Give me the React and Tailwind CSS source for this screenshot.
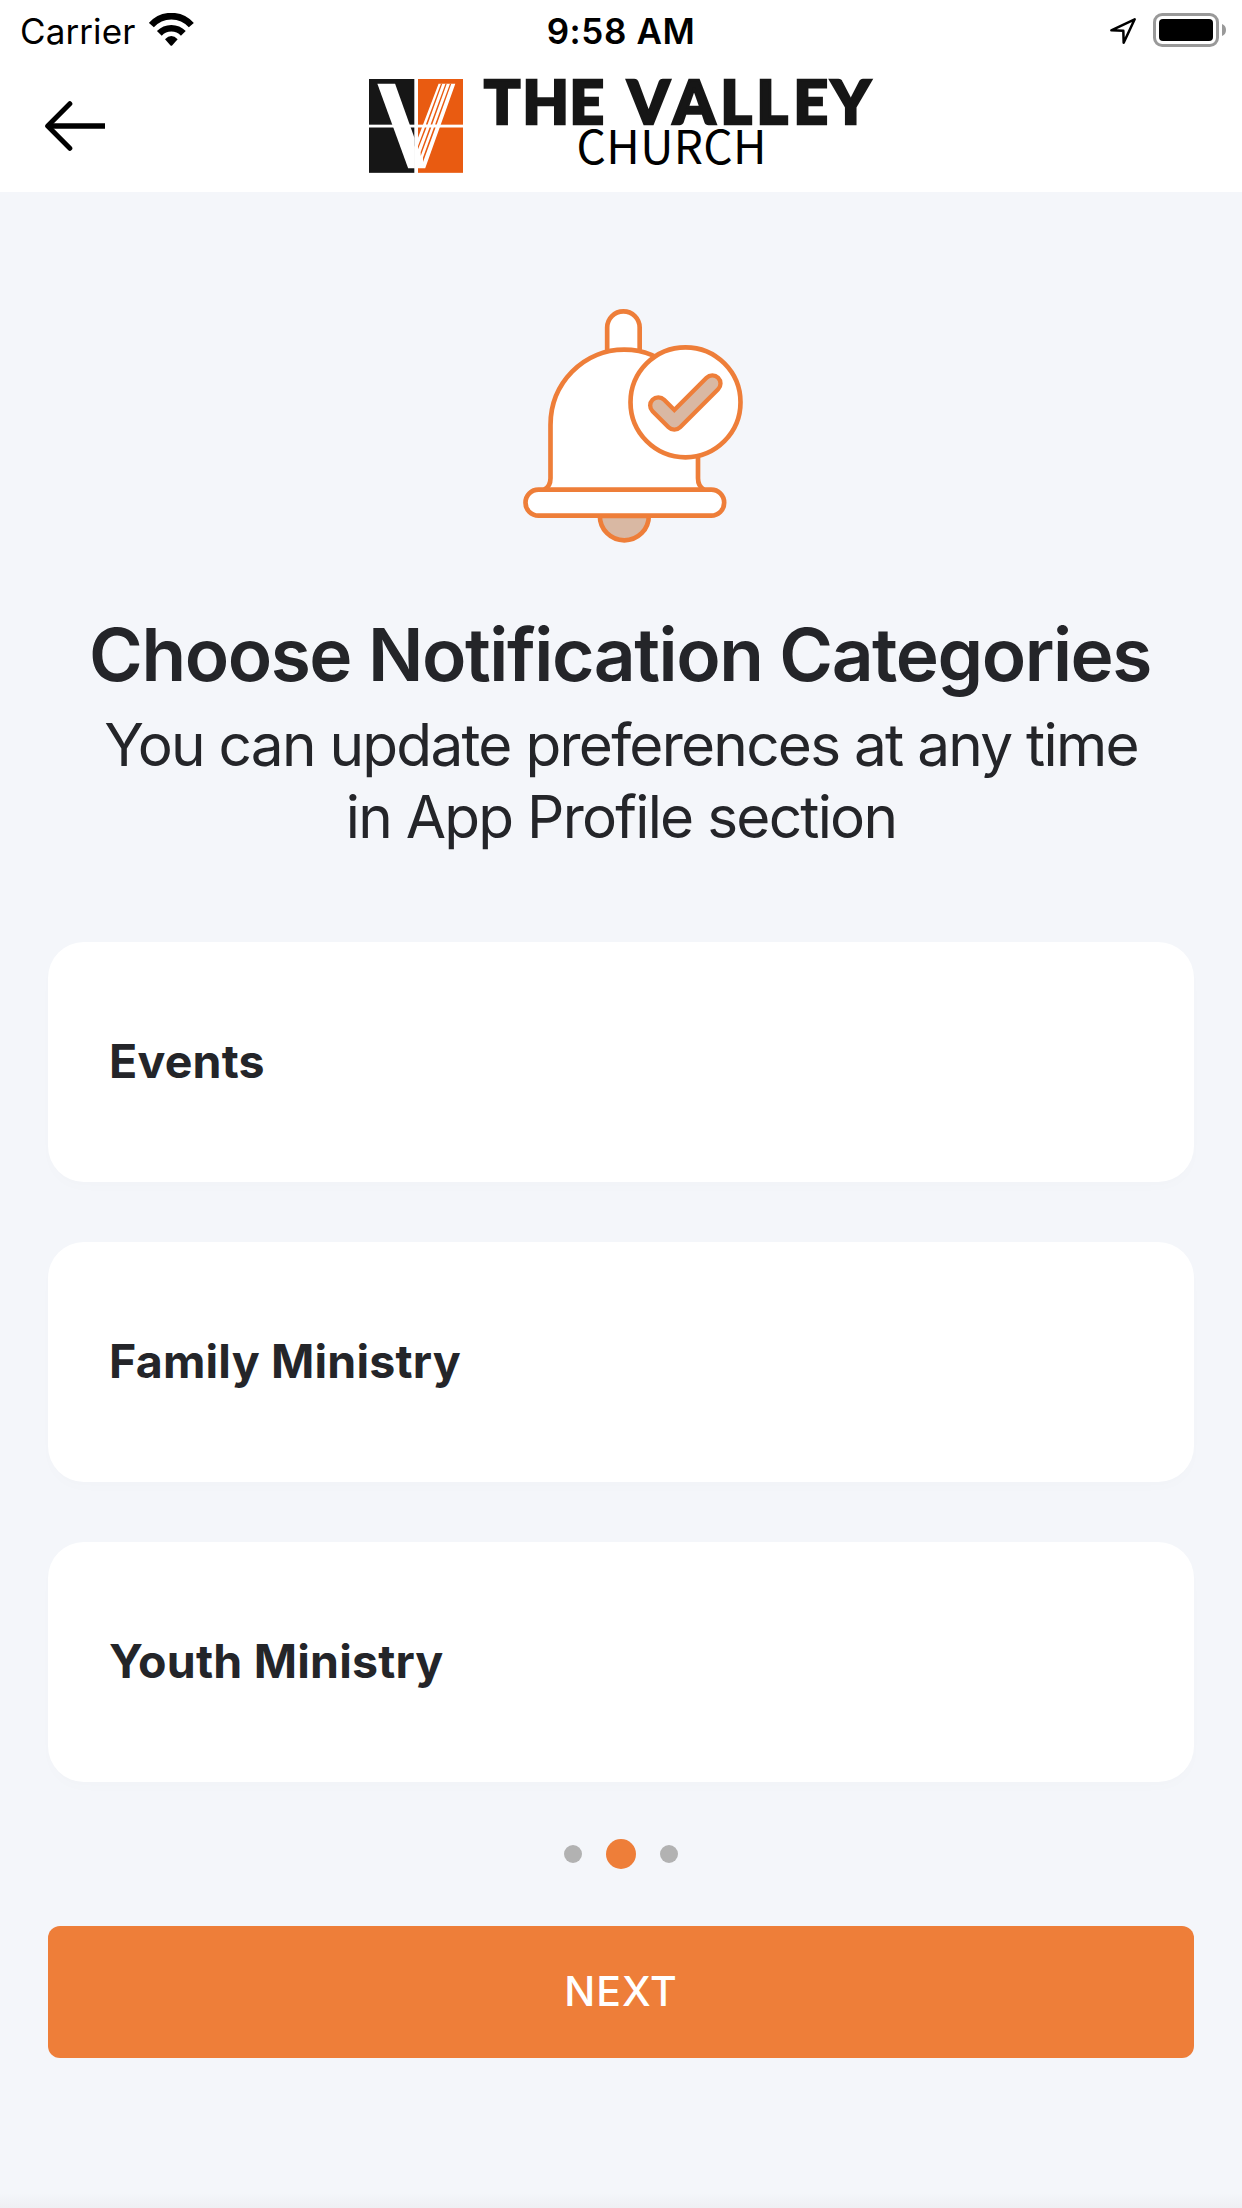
import React from 'react';

const categories = [
  { id: 'events', name: 'Events' },
  { id: 'family', name: 'Family Ministry' },
  { id: 'youth', name: 'Youth Ministry' },
];

function WifiIcon() {
  return (
    <svg className="w-[45px] h-[33px] -mt-[2px]" viewBox="449 39 135 99" fill="none" stroke="#000">
      <path strokeWidth="20" d="M456 75.500a80 80 0 0 1 120 0" />
      <path strokeWidth="20" d="M480 100a50 50 0 0 1 72 0" />
      <path fill="#000" stroke="none" d="M497 118q19-20 38 0l-16 18q-3 3-6 0z" />
    </svg>
  );
}

function LocationIcon() {
  return (
    <svg className="w-[26px] h-[26px] mt-[2px]" viewBox="90 54 78 78" fill="none" stroke="#000" strokeWidth="7.500" strokeLinejoin="round">
      <path d="M94 91L164 58L131 128L130 92Z" />
    </svg>
  );
}

function BatteryIcon() {
  return (
    <svg className="w-[73px] h-[34px]" viewBox="219 39 219 102">
      <rect x="223.500" y="43.500" width="189" height="93" rx="23" fill="none" stroke="#999" strokeWidth="9" />
      <rect x="237" y="57" width="162" height="66" rx="12" fill="#000" />
      <path d="M426 72q12 5 12 18t-12 18z" fill="#999" />
    </svg>
  );
}

function StatusBar() {
  return (
    <div className="h-[60px] grid grid-cols-[1fr_auto_1fr] items-center px-[20px]">
      <div className="flex items-center">
        <span className="w-[129px] text-[35px] leading-[58px] pt-[2px] tracking-[0.1px]">Carrier</span>
        <WifiIcon />
      </div>
      <span className="text-[35px] leading-[58px] pt-[2px] font-semibold tracking-[0.6px]">9:58 AM</span>
      <div className="flex items-center justify-end gap-[17px] -mr-[4px]">
        <LocationIcon />
        <BatteryIcon />
      </div>
    </div>
  );
}

function LogoMark() {
  return (
    <svg className="w-[94px] h-[94px]" viewBox="57 58 281 281">
      <rect x="57" y="58" width="135.500" height="136.500" fill="#161616" />
      <rect x="57" y="203" width="135.500" height="135.500" fill="#161616" />
      <rect x="203.500" y="58" width="134.500" height="136.500" fill="#e95b11" />
      <rect x="203.500" y="203" width="134.500" height="135.500" fill="#e95b11" />
      <path fill="#fff" d="M82 72H135L193 234V325H174Z" />
      <path fill="#fff" d="M265 72H315L225 325H192V262L203 235Z" />
      <path fill="#e95b11" d="M272 72h4L232 194h-5zM285.500 72h4L246 194h-5zM299 72h4L259.500 194h-5z" />
      <path fill="#e95b11" d="M224 203h5L203.500 268v-10zM238 203h5L211.500 288v-12zM251 203h5L218.500 306v-13z" />
    </svg>
  );
}

function Logo() {
  return (
    <div className="flex items-center gap-[20px] ml-[2px]">
      <LogoMark />
      <svg className="w-[392px] h-[94px] overflow-visible" viewBox="483 79 392 94">
        <text
          className="font-['Lato'] font-black text-[60px]"
          x="484 522.500 569.500 598 627.500 673 720.500 756.500 793.500 831"
          y="123.500"
          fill="#161616"
          stroke="#161616"
          strokeWidth="2.600"
        >
          THE VALLEY
        </text>
        <text className="font-['Noto_Sans_CJK_JP'] text-[46px] tracking-[0.4px]" x="576.500" y="164">
          CHURCH
        </text>
      </svg>
    </div>
  );
}

function Header() {
  return (
    <header className="h-[192px] bg-white text-black">
      <StatusBar />
      <div className="h-[132px] grid grid-cols-[1fr_auto_1fr] items-center px-[45px]">
        <button aria-label="Back">
          <svg className="w-[60px] h-[50px]" viewBox="135 303 180 150" fill="none" stroke="#000" strokeWidth="15">
            <path strokeLinecap="round" strokeLinejoin="round" d="M209.500 311L143 378L209.500 445" />
            <path strokeWidth="17" d="M148 378H315" />
          </svg>
        </button>
        <Logo />
      </div>
    </header>
  );
}

function BellIcon() {
  return (
    <svg className="w-[220px] h-[234px] ml-[24px]" viewBox="39 27 660 702" fill="#fff" stroke="#ee7e39" strokeWidth="14">
      {/* Clapper */}
      <path fill="#d9b8a3" d="M269.500 648a73.500 73 0 0 0 147 0z" />
      <path d="M291.500 155V82.500a48.750 48.500 0 0 1 97.500 0V155" />
      {/* Dome */}
      <path d="M103 569Q121.500 559 121.500 535V375A221.250 226 0 0 1 564 375V535Q564 559 582 569" />
      <rect x="46.500" y="569" width="596" height="78" rx="39" />
      {/* Check badge */}
      <circle cx="526.500" cy="307" r="165" />
      <path fill="none" strokeWidth="62" strokeLinecap="round" strokeLinejoin="round" d="M445 316.500L493 364.500L607 250.500" />
      <path fill="none" stroke="#d9b8a3" strokeWidth="36" strokeLinecap="round" strokeLinejoin="round" d="M445 316.500L493 364.500L607 250.500" />
    </svg>
  );
}

export default function App() {
  return (
    <div className="w-[1242px] h-[2208px] flex flex-col overflow-hidden bg-[#f4f6fa] text-[#242529] font-['Inter',sans-serif]">
      <Header />
      <main className="flex-1 flex flex-col items-center px-[48px] pt-[117px]">
        <BellIcon />

        <h1 className="mt-[67px] text-[73px] leading-[90px] font-semibold whitespace-nowrap tracking-[-1.45px] -ml-[2px]">
          Choose Notification Categories
        </h1>
        <p className="mt-[9px] text-[58.5px] leading-[72px] text-center whitespace-nowrap tracking-[-1.75px]">
          You can update preferences at any time
          <br />
          in App Profile section
        </p>

        {/* Categories */}
        <div className="w-full mt-[89px] flex flex-col gap-[60px]">
          {categories.map((category) => (
            <button
              key={category.id}
              className="h-[240px] rounded-[36px] bg-white px-[61px] text-left text-[46.5px] font-bold tracking-[0.2px] shadow-[0_6px_12px_rgba(0,0,0,0.012)]"
            >
              {category.name}
            </button>
          ))}
        </div>

        {/* Page dots */}
        <div className="mt-[57px] flex items-center gap-[24px]">
          <span className="w-[18px] h-[18px] rounded-full bg-[#b2b2b2]" />
          <span className="w-[30px] h-[30px] rounded-full bg-[#ee7e39]" />
          <span className="w-[18px] h-[18px] rounded-full bg-[#b2b2b2]" />
        </div>

        <button className="w-full h-[132px] mt-[57px] rounded-[12px] bg-[#ee7e39] text-white text-[41px] font-medium tracking-[1px]">
          NEXT
        </button>
      </main>
      <div className="h-[15px] bg-linear-to-b from-[#f4f6fa] to-[#eeeff3]" />
    </div>
  );
}
